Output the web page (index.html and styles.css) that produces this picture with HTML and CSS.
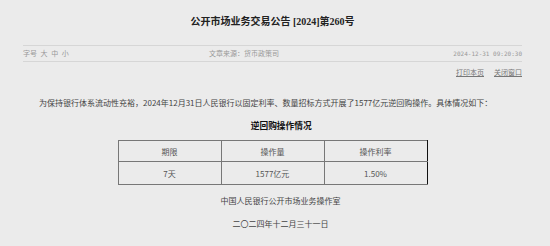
FILE: index.html
```html
<!DOCTYPE html>
<html lang="zh-CN">
<head>
	<meta charset="UTF-8">
	<title>公开市场业务交易公告 [2024]第260号</title>
	<link rel="stylesheet" href="styles.css">
</head>
<body>
	<div id="page">
		<h1 class="title">公开市场业务交易公告 [2024]第260号</h1>
		<div class="meta">
			<span class="fontsize">字号 <a>大</a> <a>中</a> <a>小</a></span>
			<span class="source">文章来源：货币政策司</span>
			<span class="date">2024-12-31 09:20:30</span>
		</div>
		<div class="tools">
			<a>打印本页</a><a>关闭窗口</a>
		</div>
		<div class="content">
			<p class="lead">为保持银行体系流动性充裕，2024年12月31日人民银行以固定利率、数量招标方式开展了1577亿元逆回购操作。具体情况如下：</p>
			<p class="subtitle">逆回购操作情况</p>
			<table class="ops">
				<tr class="head">
					<td>期限</td>
					<td>操作量</td>
					<td>操作利率</td>
				</tr>
				<tr>
					<td>7天</td>
					<td>1577亿元</td>
					<td>1.50%</td>
				</tr>
			</table>
			<p class="sign">中国人民银行公开市场业务操作室</p>
			<p class="sign date-cn">二〇二四年十二月三十一日</p>
		</div>
	</div>
</body>
</html>
```

FILE: styles.css
```css
body {
	margin: 0;
	background: #ebebeb;
	font-family: "Noto Sans CJK SC", "Liberation Sans", sans-serif;
	color: #444;
}

#page {
	width: 499px;
	margin-left: 23px;
}

.title {
	margin: 0;
	padding-top: 15px;
	height: 45px;
	box-sizing: border-box;
	line-height: 14px;
	font-size: 10px;
	font-weight: bold;
	font-family: "Liberation Serif", "Noto Sans CJK SC", serif;
	color: #222;
	text-align: center;
}

.meta {
	display: grid;
	grid-template-columns: 186px 1fr auto;
	height: 15px;
	line-height: 15px;
	border-top: 1px solid #d6d6d6;
	border-bottom: 1px solid #d6d6d6;
	font-size: 7px;
	color: #999;
}

.fontsize a {
	margin-left: 2px;
}

.date {
	font-family: "DejaVu Sans Mono", monospace;
	font-size: 6px;
}

.tools {
	margin-top: 5px;
	line-height: 10px;
	font-size: 7px;
	text-align: right;
}

.tools a {
	margin-left: 10px;
	color: #777;
	text-decoration: underline;
}

.content p {
	margin: 0;
	line-height: 12px;
	font-size: 8px;
	text-indent: 2em;
}

.lead {
	margin-top: 20px !important;
}

.subtitle {
	margin-top: 11px !important;
	text-align: center;
	font-weight: bold;
	font-size: 8.7px !important;
	color: #111;
}

.ops {
	margin: 8px auto 0;
	width: 310px;
	border-collapse: collapse;
	border: 1px solid #777;
	border-right-color: #111;
	table-layout: fixed;
	font-size: 8px;
}

.ops td {
	border: 1px solid #777;
	text-align: center;
	height: 22px;
	padding: 0;
	color: #555;
}

.ops td:last-child {
	border-right-color: #111;
}

.ops .head td {
	height: 20px;
	color: #555;
}

.sign {
	margin-top: 10px !important;
	text-align: center;
}

.date-cn {
	margin-top: 11px !important;
}
```
